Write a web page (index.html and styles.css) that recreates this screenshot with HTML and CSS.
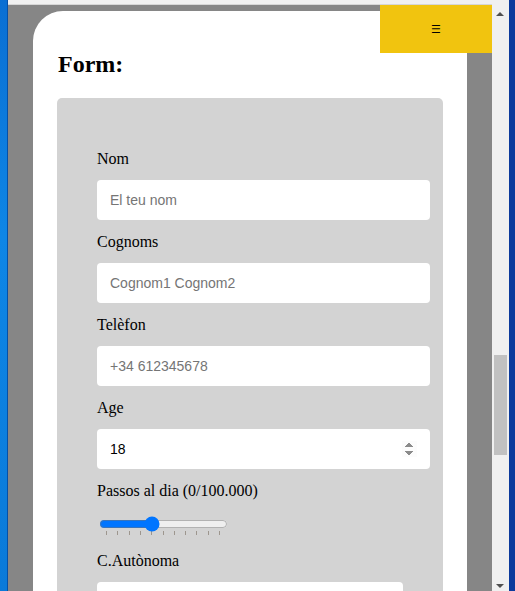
FILE: index.html
```html
<!DOCTYPE html>
<html lang="ca">
<head>
<meta charset="utf-8">
<title>Form</title>
<link rel="stylesheet" href="styles.css">
</head>
<body>
<div class="chrome-top"></div>
<div class="screen">
  <div class="desk-left"></div>
  <div class="viewport">
    <button class="menu-btn" type="button">☰</button>
    <main class="card">
      <h2 class="title">Form:</h2>
      <form class="form-box">
        <label class="field-label" for="nom">Nom</label>
        <input class="field" id="nom" type="text" placeholder="El teu nom">
        <label class="field-label" for="cognoms">Cognoms</label>
        <input class="field" id="cognoms" type="text" placeholder="Cognom1 Cognom2">
        <label class="field-label" for="tel">Telèfon</label>
        <input class="field" id="tel" type="tel" placeholder="+34 612345678">
        <label class="field-label" for="age">Age</label>
        <input class="field number" id="age" type="number" value="18">
        <label class="field-label" for="passos">Passos al dia (0/100.000)</label>
        <input class="range" id="passos" type="range" min="0" max="100000" step="1000" value="40000" list="marks">
        <datalist id="marks">
          <option value="0"></option><option value="10000"></option><option value="20000"></option>
          <option value="30000"></option><option value="40000"></option><option value="50000"></option>
          <option value="60000"></option><option value="70000"></option><option value="80000"></option>
          <option value="90000"></option><option value="100000"></option>
        </datalist>
        <label class="field-label" for="ca">C.Autònoma</label>
        <select class="field select" id="ca"><option>Catalunya</option></select>
      </form>
    </main>
  </div>
  <div class="scrollbar">
    <span class="arrow up"></span>
    <span class="thumb"></span>
    <span class="arrow down"></span>
  </div>
  <div class="desk-right"></div>
</div>
</body>
</html>
```
FILE: styles.css
```css
html, body {
  margin: 0;
  padding: 0;
}
body {
  width: 515px;
  height: 591px;
  overflow: hidden;
  display: flex;
  flex-direction: column;
  background: #868686;
  font-family: "Liberation Serif", "Times New Roman", serif;
}
.chrome-top {
  height: 4px;
  background: #f0f0f0;
  border-bottom: 1px solid #d6d6d6;
  margin-left: 8px;
  margin-right: 6px;
  flex: none;
}
.screen {
  flex: 1;
  display: flex;
  min-height: 0;
}
.desk-left {
  width: 7px;
  background: linear-gradient(180deg, #0a6fd3 0%, #0e86e6 40%, #0a7ad9 100%);
  border-right: 1px solid #0550a8;
  margin-top: -5px;
  flex: none;
}
.viewport {
  position: relative;
  flex: 1;
  background: #868686;
  overflow: hidden;
}
.menu-btn {
  position: absolute;
  top: 0;
  right: 0;
  width: 112px;
  height: 48px;
  border: none;
  background: #f1c40f;
  font-family: "DejaVu Sans", sans-serif;
  font-size: 11px;
  color: #000;
  padding: 0;
  z-index: 2;
}
.card {
  margin: 6px 0 0 25px;
  width: 434px;
  min-height: 700px;
  background: #fff;
  border-top-left-radius: 30px;
  padding: 39px 0 0 24px;
  box-sizing: border-box;
}
.title {
  margin: 0 0 20px 0;
  font-size: 24px;
  font-weight: bold;
  line-height: 28px;
  padding-left: 1px;
}
.form-box {
  width: 386px;
  box-sizing: border-box;
  background: #d3d3d3;
  border-radius: 5px;
  padding: 52px 0 40px 40px;
  display: flex;
  flex-direction: column;
  align-items: flex-start;
  min-height: 600px;
}
.field-label {
  font-size: 16px;
  line-height: 18px;
  margin-bottom: 12px;
}
.field {
  width: 333px;
  height: 40px;
  box-sizing: border-box;
  border: none;
  border-radius: 4px;
  background: #fff;
  padding: 0 13px 0 13px;
  font-family: "Liberation Sans", Arial, sans-serif;
  font-size: 14px;
  color: #000;
  margin: 0 0 13px 0;
}
.field::placeholder {
  color: #757575;
}
.number::-webkit-inner-spin-button {
  opacity: 1;
}
.select {
  width: 306px;
}
.range {
  width: 129px;
  margin: 1px 2px 17px 2px;
}
.scrollbar {
  width: 17px;
  background: #f0f0f0;
  position: relative;
  flex: none;
  margin-top: -5px;
}
.thumb {
  position: absolute;
  left: 2px;
  top: 355px;
  width: 13px;
  height: 100px;
  background: #c1c1c1;
}
.arrow {
  position: absolute;
  left: 4px;
  width: 0;
  height: 0;
  border-left: 4px solid transparent;
  border-right: 4px solid transparent;
}
.arrow.up {
  top: 12px;
  border-bottom: 4px solid #505050;
}
.arrow.down {
  bottom: 3px;
  border-top: 4px solid #505050;
}
.desk-right {
  width: 6px;
  background: #0b3a9c;
  margin-top: -5px;
  flex: none;
}
```
